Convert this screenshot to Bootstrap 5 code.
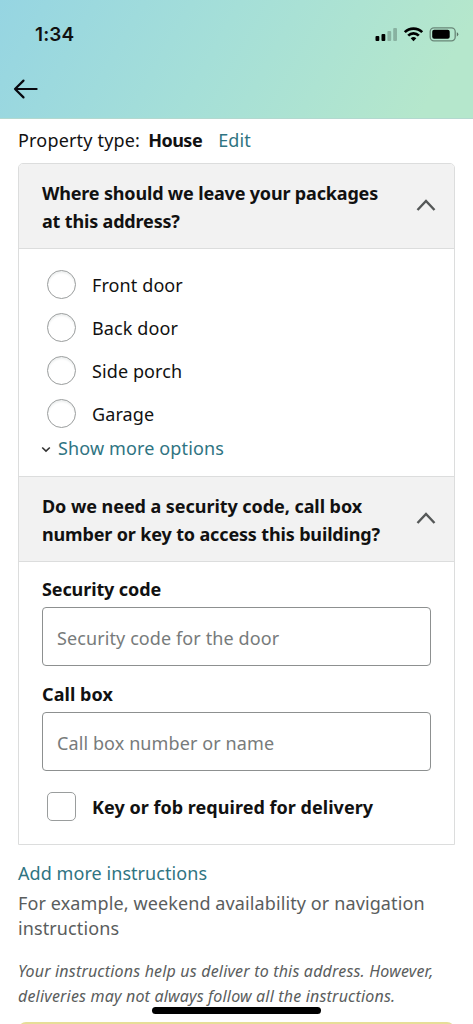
<!DOCTYPE html>
<html lang="en">
<head>
<meta charset="utf-8">
<meta name="viewport" content="width=device-width, initial-scale=1">
<title>Delivery instructions</title>
<link rel="stylesheet" href="https://cdn.jsdelivr.net/npm/bootstrap@5.3.0/dist/css/bootstrap.min.css">
<style>
body{font-family:"Noto Sans",sans-serif;font-size:18px;line-height:28px;letter-spacing:.1px;color:#111;background:#fff;height:1024px;overflow:hidden;position:relative}
.app-top{height:119px;background:linear-gradient(119deg,#96d5e2 0%,#a5dfd8 45%,#b5e7cc 90%);border-bottom:1px solid #b3d8cf}
.clock{font:600 19px/24px Inter,sans-serif;letter-spacing:.1px;padding:23px 0 0 35px}
.status-icons{padding:26px 14px 0 0}
.back-btn{padding:32px 0 0 13px;line-height:0}
.ember-link{color:#2f7482;text-decoration:none}
.prop-line{height:44px;padding:7px 0 0 18px}
.prop-label{letter-spacing:.18px}
.prop-value{letter-spacing:-.5px;margin:0 16px 0 8px}
.panel{margin:0 18px;border:1px solid #dcdddd;border-radius:5px 5px 0 0;height:682px}
.panel-head{background:#f2f2f2;height:85px;padding:15px 18px 0 23px;border-bottom:1px solid #dcdddd;font-weight:700;letter-spacing:-.17px;white-space:nowrap;border-radius:4px 4px 0 0}
.panel-head.second{border-top:1px solid #dcdddd;height:86px;letter-spacing:-.15px;border-radius:0}
.panel-head svg{margin-top:20px}
.looser{letter-spacing:-.06px}
.options{height:227px;padding:14px 0 0 28px}
.option-row{height:43px;gap:16px}
.form-check-input.opt{width:29px;height:29px;margin:0;border:1.5px solid #9a9d9d;box-shadow:inset 0 2px 2px #eef0f0;flex:none}
.form-check-input.sq{border-radius:5px;box-shadow:none}
.more-row{margin-left:-6px;margin-top:-1px;gap:7px;height:28px;letter-spacing:.13px}
.fields{padding:13px 23px 0}
.field-title{font-weight:700;display:block;height:32px;letter-spacing:-.11px}
.field-title.wide{letter-spacing:.07px}
.form-control.entry{height:59px;border:1.5px solid #8d9090;border-radius:4px;padding:2px 14px 0;font-size:18px;letter-spacing:.1px;margin-bottom:14px}
.form-control.entry::placeholder{color:#777b7b;opacity:1}
.key-row{padding:7px 0 0 5px;gap:16px;letter-spacing:.03px}
.notes{padding:14px 18px 0;color:#5a5d5d}
.notes .ember-link{letter-spacing:.06px}
.hint{line-height:25px;margin-top:4px;letter-spacing:.11px}
.fine{font-size:16px;line-height:25px;font-style:italic;margin-top:18px;letter-spacing:.18px;white-space:nowrap}
.home-bar{position:absolute;left:152px;top:1007px;width:169px;height:7px;border-radius:4px;background:#000}
.save-btn,.save-btn:hover{position:absolute;left:18px;right:18px;top:1022px;height:50px;border:2px solid #e6de98;border-radius:8px;background:#f7e08a;padding:0}
</style>
</head>
<body>
<header class="app-top">
  <div class="d-flex justify-content-between">
    <div class="clock">1:34</div>
    <div class="status-icons d-flex">
      <svg width="84" height="18" viewBox="0 0 84 18">
        <rect x="0.5" y="10" width="3.8" height="5" rx="1"/><rect x="6.5" y="8" width="3.8" height="7" rx="1"/>
        <g fill="#000" opacity=".22"><rect x="12.4" y="5" width="3.8" height="10" rx="1"/><rect x="18.2" y="2" width="3.8" height="13" rx="1"/></g>
        <g fill="none" stroke="#000" stroke-width="2.7"><path d="M29.8 6.1a12.5 12.5 0 0 1 17.4 0"/><path d="M33.2 9.6a7.6 7.6 0 0 1 10.6 0"/></g>
        <path d="M35.7 12.3a4.2 4.2 0 0 1 5.6 0L38.5 15.2z"/>
        <rect x="55.2" y="1.8" width="25" height="13" rx="3.8" fill="none" stroke="#000" stroke-opacity=".42" stroke-width="1.3"/>
        <rect x="57.2" y="3.8" width="17.5" height="9" rx="2"/><path d="M81.8 6.2v4.2q1.5-.6 1.5-2.1t-1.5-2.1z" opacity=".5"/>
      </svg>
    </div>
  </div>
  <div class="back-btn"><svg width="26" height="20" viewBox="0 0 26 20" fill="none" stroke="#08080f" stroke-width="2.2" stroke-linecap="round" stroke-linejoin="round"><path d="M10.5 1.6 2 10l8.5 8.4M2 10h21.6"/></svg></div>
</header>
<main>
  <div class="prop-line d-flex"><span class="prop-label">Property type:</span><b class="prop-value">House</b><a class="ember-link">Edit</a></div>
  <section class="panel">
    <div class="panel-head d-flex justify-content-between">
      <div>Where should we leave your packages<br>at this address?</div>
      <svg width="20" height="14" viewBox="0 0 20 14" fill="none" stroke="#555858" stroke-width="2.4"><path d="M1.5 11 10 2l8.5 9"/></svg>
    </div>
    <div class="options">
      <label class="option-row d-flex align-items-center"><input class="form-check-input opt" type="radio" name="place"><span>Front door</span></label>
      <label class="option-row d-flex align-items-center"><input class="form-check-input opt" type="radio" name="place"><span>Back door</span></label>
      <label class="option-row d-flex align-items-center"><input class="form-check-input opt" type="radio" name="place"><span>Side porch</span></label>
      <label class="option-row d-flex align-items-center"><input class="form-check-input opt" type="radio" name="place"><span>Garage</span></label>
      <div class="more-row d-flex align-items-center"><svg class="mt-1" width="10" height="8" viewBox="0 0 10 8" fill="none" stroke="#333" stroke-width="1.6"><path d="M1.2 1.5 5 5.1 8.8 1.5"/></svg><a class="ember-link">Show more options</a></div>
    </div>
    <div class="panel-head second d-flex justify-content-between">
      <div><span class="looser">Do we need a security code, call box</span><br>number or key to access this building?</div>
      <svg width="20" height="14" viewBox="0 0 20 14" fill="none" stroke="#555858" stroke-width="2.4"><path d="M1.5 11 10 2l8.5 9"/></svg>
    </div>
    <div class="fields">
      <label class="field-title" for="code">Security code</label>
      <input class="form-control entry" id="code" placeholder="Security code for the door">
      <label class="field-title wide" for="callbox">Call box</label>
      <input class="form-control entry" id="callbox" placeholder="Call box number or name">
      <label class="key-row d-flex align-items-center"><input class="form-check-input opt sq" type="checkbox"><b>Key or fob required for delivery</b></label>
    </div>
  </section>
  <div class="notes">
    <a class="ember-link">Add more instructions</a>
    <div class="hint">For example, weekend availability or navigation<br>instructions</div>
    <div class="fine">Your instructions help us deliver to this address. However,<br>deliveries may not always follow all the instructions.</div>
  </div>
</main>
<button class="btn save-btn" aria-label="Save"></button>
<div class="home-bar"></div>
<script src="https://cdn.jsdelivr.net/npm/bootstrap@5.3.0/dist/js/bootstrap.bundle.min.js"></script>
</body>
</html>
